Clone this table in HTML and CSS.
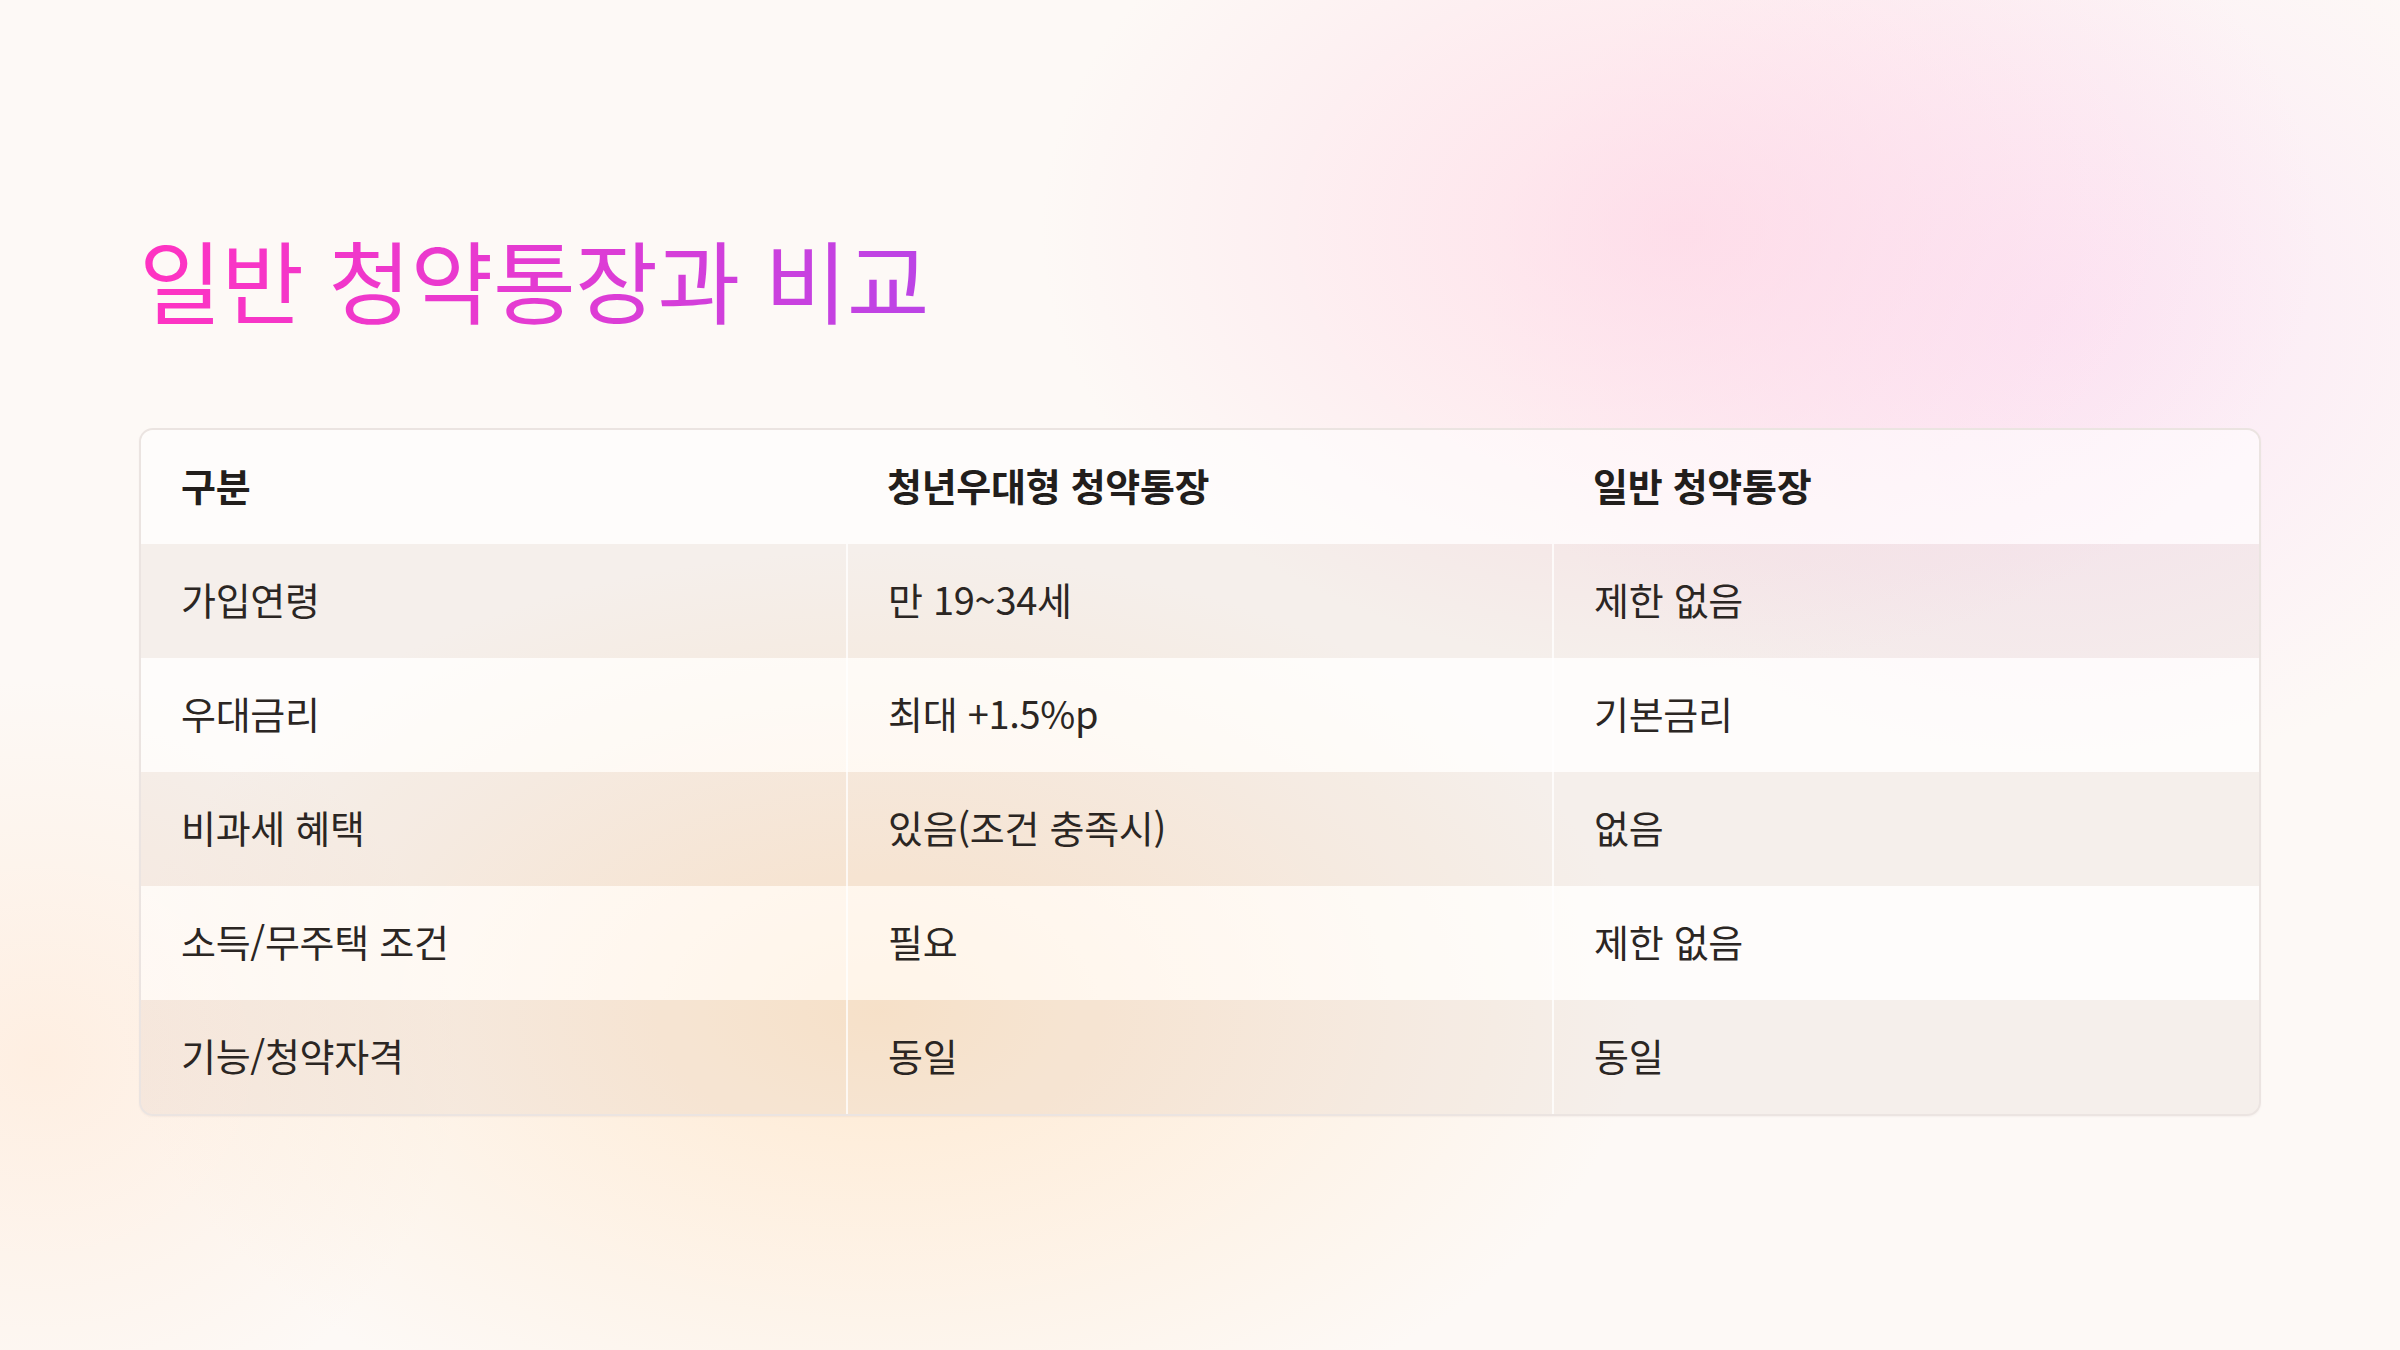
FILE: index.html
```html
<!DOCTYPE html>
<html lang="ko">
<head>
<meta charset="utf-8">
<title>일반 청약통장과 비교</title>
<link rel="stylesheet" href="styles.css">
</head>
<body>
<main class="slide">
  <h1 class="title">일반 청약통장과 비교</h1>
  <div class="table-wrap">
    <table class="compare">
      <thead>
        <tr><th>구분</th><th>청년우대형 청약통장</th><th>일반 청약통장</th></tr>
      </thead>
      <tbody>
        <tr><td>가입연령</td><td>만 19~34세</td><td>제한 없음</td></tr>
        <tr><td>우대금리</td><td>최대 +1.5%p</td><td>기본금리</td></tr>
        <tr><td>비과세 혜택</td><td>있음(조건 충족시)</td><td>없음</td></tr>
        <tr><td>소득/무주택 조건</td><td>필요</td><td>제한 없음</td></tr>
        <tr><td>기능/청약자격</td><td>동일</td><td>동일</td></tr>
      </tbody>
    </table>
  </div>
</main>
</body>
</html>
```
FILE: styles.css
```css
html, body {
  margin: 0;
  padding: 0;
}
body {
  width: 2400px;
  height: 1350px;
  overflow: hidden;
  font-family: "Noto Sans CJK KR", "Noto Sans", sans-serif;
  color: #2b2623;
  background-color: #fdf9f6;
  background-image:
    radial-gradient(ellipse 640px 440px at 1680px 230px, rgba(255, 208, 226, 0.62), rgba(255, 208, 226, 0) 100%),
    radial-gradient(ellipse 560px 460px at 2050px 320px, rgba(250, 218, 245, 0.6), rgba(250, 218, 245, 0) 100%),
    radial-gradient(ellipse 760px 460px at 880px 1010px, rgba(255, 226, 192, 0.68), rgba(255, 226, 192, 0) 100%),
    radial-gradient(ellipse 420px 380px at 40px 1060px, rgba(255, 228, 205, 0.5), rgba(255, 228, 205, 0) 100%);
}
.slide {
  box-sizing: border-box;
  width: 2400px;
  height: 1350px;
  padding: 224px 139px 0;
  display: flex;
  flex-direction: column;
}
.title {
  margin: 0;
  font-size: 90px;
  font-weight: 400;
  line-height: 1.2;
  letter-spacing: -0.5px;
  width: max-content;
  background: linear-gradient(90deg, #ff33c2 0%, #e43bd2 50%, #bb44e6 100%);
  -webkit-background-clip: text;
  background-clip: text;
  color: transparent;
}
.table-wrap {
  margin-top: 96px;
  border: 2px solid #ebe4e1;
  border-radius: 14px;
  overflow: hidden;
  box-shadow: 0 1px 2px rgba(120, 90, 80, 0.06);
}
.compare {
  width: 100%;
  border-collapse: collapse;
  table-layout: fixed;
}
.compare th,
.compare td {
  height: 114px;
  box-sizing: border-box;
  padding: 0 40px 5px;
  text-align: left;
  vertical-align: middle;
  font-size: 38px;
  letter-spacing: -0.3px;
  line-height: 1;
}
.compare th {
  font-weight: 700;
  color: #221e1c;
}
.compare td {
  font-weight: 400;
}
.compare td + td {
  border-left: 2px solid rgba(255, 255, 255, 0.75);
}
.compare thead tr {
  background: rgba(255, 255, 255, 0.55);
}
.compare tbody tr:nth-child(odd) {
  background: rgba(110, 80, 60, 0.055);
}
.compare tbody tr:nth-child(even) {
  background: rgba(255, 255, 255, 0.5);
}
```
